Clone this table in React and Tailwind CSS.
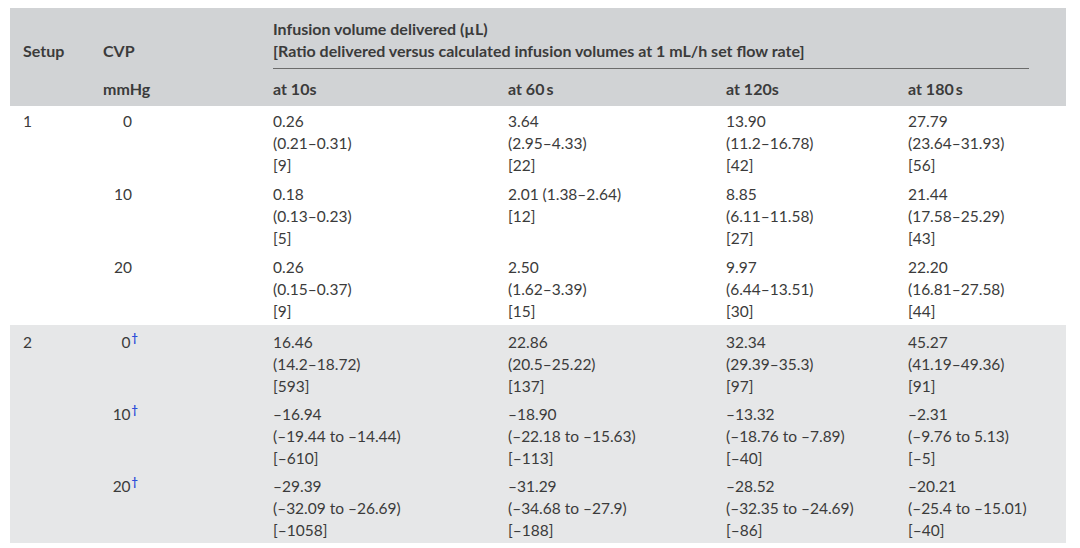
import React from 'react';

// Table rows: [cvp, cells]
const setup1 = [
  ['0', [['0.26', '(0.21–0.31)', '[9]'], ['3.64', '(2.95–4.33)', '[22]'], ['13.90', '(11.2–16.78)', '[42]'], ['27.79', '(23.64–31.93)', '[56]']]],
  ['10', [['0.18', '(0.13–0.23)', '[5]'], ['2.01 (1.38–2.64)', '[12]'], ['8.85', '(6.11–11.58)', '[27]'], ['21.44', '(17.58–25.29)', '[43]']]],
  ['20', [['0.26', '(0.15–0.37)', '[9]'], ['2.50', '(1.62–3.39)', '[15]'], ['9.97', '(6.44–13.51)', '[30]'], ['22.20', '(16.81–27.58)', '[44]']]],
];

const setup2 = [
  ['0', [['16.46', '(14.2–18.72)', '[593]'], ['22.86', '(20.5–25.22)', '[137]'], ['32.34', '(29.39–35.3)', '[97]'], ['45.27', '(41.19–49.36)', '[91]']]],
  ['10', [['–16.94', '(–19.44 to –14.44)', '[–610]'], ['–18.90', '(–22.18 to –15.63)', '[–113]'], ['–13.32', '(–18.76 to –7.89)', '[–40]'], ['–2.31', '(–9.76 to 5.13)', '[–5]']]],
  ['20', [['–29.39', '(–32.09 to –26.69)', '[–1058]'], ['–31.29', '(–34.68 to –27.9)', '[–188]'], ['–28.52', '(–32.35 to –24.69)', '[–86]'], ['–20.21', '(–25.4 to –15.01)', '[–40]']]],
];

const cols = 'grid grid-cols-[93px_170px_235px_218px_182px_158px]';

function Cell({ lines }) {
  return (
    <div className="leading-[22px]">
      {lines.map((l, i) => (
        <div key={i} className="whitespace-nowrap">{l}</div>
      ))}
    </div>
  );
}

function Row({ setup, cvp, dagger, cells, h }) {
  return (
    <div className={`${cols} ${h} pt-[4px]`}>
      <div className="pl-[13px] leading-[22px]">{setup}</div>
      <div className="leading-[22px]">
        {dagger ? (
          <div className="w-[35px] text-right">
            {cvp}
            <span className="relative -top-[6px] ml-[1px] text-[11px] font-bold text-[#2b4bd8]">†</span>
          </div>
        ) : (
          <div className="w-[29px] text-right">{cvp}</div>
        )}
      </div>
      {cells.map((c, i) => (
        <Cell key={i} lines={c} />
      ))}
    </div>
  );
}

export default function App() {
  return (
    <div className="w-[1080px] h-[548px] bg-white pt-[8px] pl-[10px] text-[15.5px] text-[#3b3b3b] font-['Lato','Liberation_Sans',sans-serif]">
      <div className="w-[1056px]">
        {/* header */}
        <div className="bg-[#d1d3d5] pt-[10px] pb-[6px] font-bold text-[16px]">
          <div className={cols}>
            <div className="pl-[13px] pt-[22px] leading-[22px]">Setup</div>
            <div className="pt-[22px] leading-[22px]">CVP</div>
            <div className="col-span-4 pr-[37px]">
              <div className="leading-[22px]">Infusion volume delivered (µL)</div>
              <div className="leading-[22px]">[Ratio delivered versus calculated infusion volumes at 1 mL/h set flow rate]</div>
              <div className="mt-[6px] border-b border-[#6b6b6b]"></div>
            </div>
          </div>
          <div className={`${cols} pt-[9px] leading-[22px]`}>
            <div></div>
            <div>mmHg</div>
            <div>at 10s</div>
            <div>at 60{'\u2009'}s</div>
            <div>at 120s</div>
            <div>at 180{'\u2009'}s</div>
          </div>
        </div>

        {/* setup 1 */}
        <div className="bg-white">
          {setup1.map(([cvp, cells], i) => (
            <Row key={i} setup={i === 0 ? '1' : ''} cvp={cvp} cells={cells} h="h-[73px]" />
          ))}
        </div>

        {/* setup 2 */}
        <div className="bg-[#e6e7e8] pt-[2px]">
          {setup2.map(([cvp, cells], i) => (
            <Row key={i} setup={i === 0 ? '2' : ''} cvp={cvp} dagger cells={cells} h="h-[72px]" />
          ))}
        </div>
      </div>
    </div>
  );
}
